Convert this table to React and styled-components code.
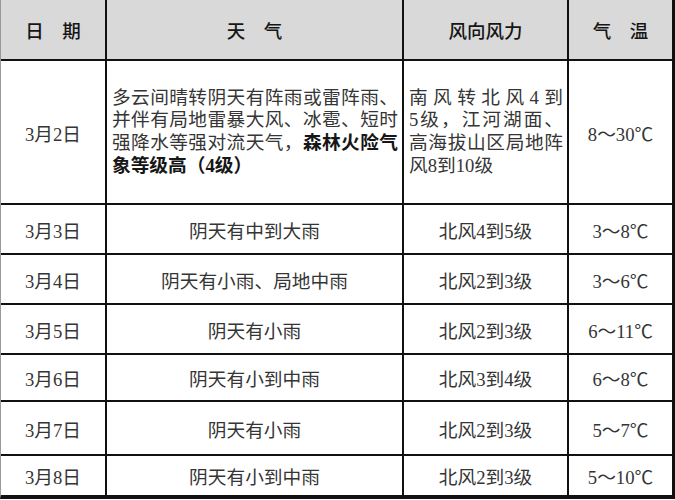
import React from "react";
import styled, { createGlobalStyle } from "styled-components";

const GlobalStyle = createGlobalStyle`
	html, body {
		margin: 0;
		padding: 0;
		background: #ffffff;
	}
`;

const rows = [
	{ date: "3月3日", weather: "阴天有中到大雨", wind: "北风4到5级", temp: "3～8℃" },
	{ date: "3月4日", weather: "阴天有小雨、局地中雨", wind: "北风2到3级", temp: "3～6℃" },
	{ date: "3月5日", weather: "阴天有小雨", wind: "北风2到3级", temp: "6～11℃" },
	{ date: "3月6日", weather: "阴天有小到中雨", wind: "北风3到4级", temp: "6～8℃" },
	{ date: "3月7日", weather: "阴天有小雨", wind: "北风2到3级", temp: "5～7℃" },
	{ date: "3月8日", weather: "阴天有小到中雨", wind: "北风2到3级", temp: "5～10℃" },
];

export default function App() {
	return (
		<>
			<GlobalStyle />
			<StyledTable>
				<StyledHeadCell>日　期</StyledHeadCell>
				<StyledHeadCell>天　气</StyledHeadCell>
				<StyledHeadCell>风向风力</StyledHeadCell>
				<StyledHeadCell>气　温</StyledHeadCell>

				<StyledCell>3月2日</StyledCell>
				<StyledTextCell>
					<StyledLine $spread>多云间晴转阴天有阵雨或雷阵雨、</StyledLine>
					<StyledLine $spread>并伴有局地雷暴大风、冰雹、短时</StyledLine>
					<StyledLine $spread>
						强降水等强对流天气，<StyledStrong>森林火险气</StyledStrong>
					</StyledLine>
					<StyledLine>
						<StyledStrong>象等级高（4级）</StyledStrong>
					</StyledLine>
				</StyledTextCell>
				<StyledTextCell>
					<StyledLine $spread>南风转北风4到</StyledLine>
					<StyledLine $spread>5级，江河湖面、</StyledLine>
					<StyledLine $spread>高海拔山区局地阵</StyledLine>
					<StyledLine>风8到10级</StyledLine>
				</StyledTextCell>
				<StyledCell>8～30℃</StyledCell>

				{rows.map((row) => (
					<React.Fragment key={row.date}>
						<StyledCell>{row.date}</StyledCell>
						<StyledCell>{row.weather}</StyledCell>
						<StyledCell>{row.wind}</StyledCell>
						<StyledCell>{row.temp}</StyledCell>
					</React.Fragment>
				))}
			</StyledTable>
		</>
	);
}

const StyledTable = styled.div`
	display: grid;
	grid-template-columns: 104px 295px 163px 103px;
	grid-template-rows: 59px 142px 48px 48px 48px 45px 52px 39px;
	gap: 2px;
	width: 672px;
	background: #111111;
	border-left: 1px solid #9a9a9a;
	border-right: 2px solid #111111;
	border-bottom: 4px double #111111;
	font-family: "Liberation Serif", "Noto Sans CJK SC", serif;
	font-size: 18.7px;
	color: #353535;
`;

const StyledHeadCell = styled.div`
	display: flex;
	align-items: center;
	justify-content: center;
	background: #d9d9d9;
	font-family: "Noto Sans CJK SC", sans-serif;
	font-size: 18.5px;
	font-weight: 500;
	color: #161616;
`;

const StyledCell = styled.div`
	display: flex;
	align-items: center;
	justify-content: center;
	background: #ffffff;
	white-space: nowrap;
`;

const StyledTextCell = styled.div`
	display: flex;
	flex-direction: column;
	justify-content: center;
	padding: 0 4px 0 5px;
	background: #ffffff;
	line-height: 22.7px;
`;

const StyledLine = styled.span`
	display: block;
	white-space: nowrap;
	text-align: ${({ $spread }) => ($spread ? "justify" : "left")};
	text-align-last: ${({ $spread }) => ($spread ? "justify" : "left")};
`;

const StyledStrong = styled.b`
	font-weight: 700;
	color: #161616;
`;
